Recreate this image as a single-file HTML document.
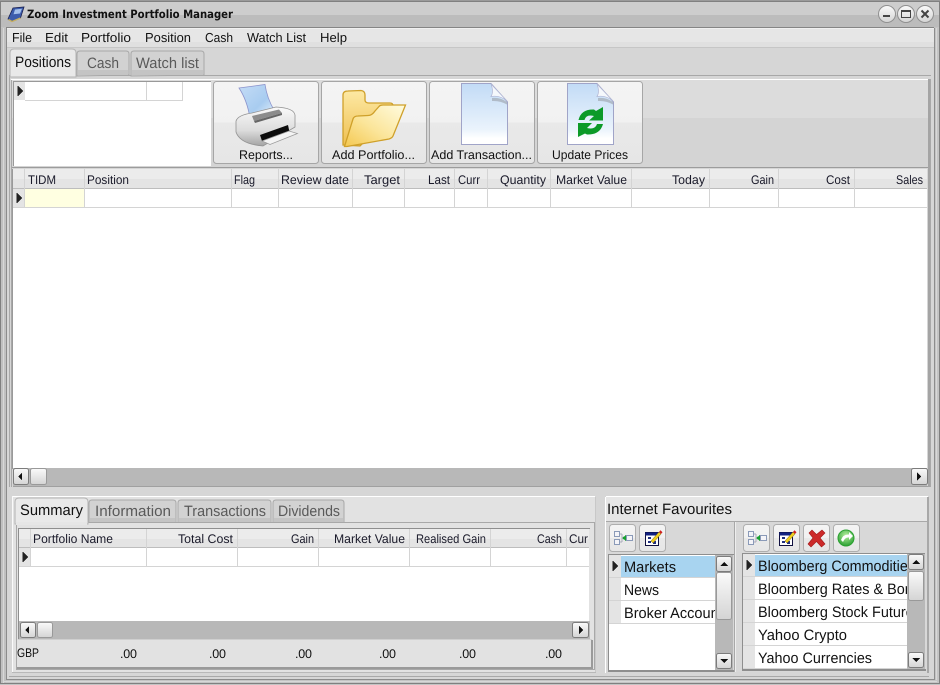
<!DOCTYPE html>
<html><head><meta charset="utf-8"><title>Zoom Investment Portfolio Manager</title>
<style>
html,body{margin:0;padding:0;background:#c8c8c8;overflow:hidden}
svg{display:block;width:940px;height:685px}
text{font-family:"Liberation Sans",sans-serif;font-size:12.5px;fill:#111;text-rendering:geometricPrecision}
.h{font-size:12.5px;fill:#1a1a2a}
.m{font-size:13px;fill:#111}
.t{font-size:15px;fill:#5a5a5a}
.l{font-size:15px;fill:#111}
</style></head><body>
<svg xmlns="http://www.w3.org/2000/svg" width="940" height="685" viewBox="0 0 940 685" shape-rendering="crispEdges">
<defs>
<clipPath id="cl"><rect x="621" y="555" width="94" height="70"/></clipPath>
<clipPath id="cr"><rect x="755" y="554" width="152" height="115"/></clipPath>
<linearGradient id="btn" x1="0" y1="0" x2="0" y2="1"><stop offset="0" stop-color="#f4f4f4"/><stop offset=".5" stop-color="#f1f1f1"/><stop offset=".5" stop-color="#e9e9e9"/><stop offset="1" stop-color="#e6e6e6"/></linearGradient>
<linearGradient id="sb" x1="0" y1="0" x2="0" y2="1"><stop offset="0" stop-color="#fafafa"/><stop offset="1" stop-color="#d4d4d4"/></linearGradient>
<linearGradient id="doc" x1="0" y1="0" x2="0" y2="1"><stop offset="0" stop-color="#c2dbf6"/><stop offset=".75" stop-color="#eaf3fc"/><stop offset=".9" stop-color="#fff"/><stop offset="1" stop-color="#fff"/></linearGradient>
<linearGradient id="fold" x1="0" y1="0" x2="0" y2="1"><stop offset="0" stop-color="#fde9a4"/><stop offset="1" stop-color="#eebf50"/></linearGradient>
<linearGradient id="fold2" x1="1" y1="0" x2="0" y2="1"><stop offset="0" stop-color="#fffce0"/><stop offset=".55" stop-color="#fbe59a"/><stop offset="1" stop-color="#f4c850"/></linearGradient>
<linearGradient id="pr" x1="0" y1="0" x2="0" y2="1"><stop offset="0" stop-color="#fafafa"/><stop offset=".6" stop-color="#dcdcdc"/><stop offset="1" stop-color="#a4a4a4"/></linearGradient>
<linearGradient id="pap" x1="0" y1="0" x2="1" y2="1"><stop offset="0" stop-color="#c4dcf6"/><stop offset=".6" stop-color="#a8ccf0"/><stop offset="1" stop-color="#e8f2fb"/></linearGradient>
<radialGradient id="grn" cx=".5" cy=".35" r=".7"><stop offset="0" stop-color="#b8f0a0"/><stop offset="1" stop-color="#1f9a2a"/></radialGradient>

<g id="rowmark"><path d="M0 0L5 5L0 10Z" fill="#222"/><path d="M0 0L0 10" stroke="#222"/></g>
<g id="tree" shape-rendering="crispEdges">
<rect x="0.5" y="0.5" width="5" height="5" fill="#f4f4f8" stroke="#8a9ab8"/>
<rect x="0.5" y="8.5" width="5" height="5" fill="#f4f4f8" stroke="#8a9ab8"/>
<rect x="12.5" y="4.5" width="6" height="5" fill="#f4f4f8" stroke="#8a9ab8"/>
<path d="M6 3H8M6 11H8M8 3V11" stroke="#aab" fill="none"/>
<path d="M12 4V10L8 7Z" fill="#18a030"/>
</g>
<g id="edit" shape-rendering="auto">
<rect x="0.5" y="3.5" width="13" height="13" fill="#fff" stroke="#101040"/>
<rect x="0.5" y="3.5" width="13" height="3" fill="#102080"/>
<path d="M3 8H6V10H3ZM3 12H6V14H3ZM8 12H11V15H8Z" fill="#203080"/>
<path d="M6 12L14 3L16 5L8 14Z" fill="#f0d020" stroke="#806010" stroke-width=".5"/>
<path d="M14 3L15.500 1.200L17.500 3.200L16 5Z" fill="#d02020"/>
</g>
</defs>

<!-- window frame -->
<rect width="940" height="685" fill="#c4c4c4"/>
<rect x="0" y="0" width="940" height="1" fill="#9a9a9a"/>
<rect x="0.5" y="1.500" width="939" height="682" fill="none" stroke="#808080"/>
<rect x="1" y="2" width="938" height="13" fill="#cdcdcd"/>
<rect x="1" y="15" width="938" height="12" fill="#bcbcbc"/>
<rect x="6" y="27" width="928" height="1" fill="#858585"/>
<rect x="1" y="28" width="5" height="655" fill="#c0c0c0"/>
<rect x="3" y="28" width="1" height="655" fill="#d8d8d8"/>
<rect x="6" y="28" width="1" height="651" fill="#8c8c8c"/>
<rect x="934" y="28" width="1" height="652" fill="#8c8c8c"/>
<rect x="936" y="28" width="1" height="652" fill="#d8d8d8"/>
<rect x="6" y="679" width="929" height="1" fill="#8c8c8c"/>
<rect x="3" y="681" width="934" height="1" fill="#d8d8d8"/>

<!-- title icon -->
<g shape-rendering="auto">
<path d="M8 19L13 8L24 7L20.500 18L12 21.500Z" fill="#3c5cac" stroke="#1a2050" stroke-width=".8"/>
<path d="M8.500 19.500L12 21.500L20.500 18" fill="none" stroke="#c8b060" stroke-width="1.300"/>
<path d="M15 9.500L22 8.800L20 13.500L13.500 14.200Z" fill="#a4c0ec"/>
</g>
<text x="27" y="18" style="font-size:11.5px;font-weight:bold;font-family:'DejaVu Sans',sans-serif" textLength="206" lengthAdjust="spacingAndGlyphs">Zoom Investment Portfolio Manager</text>

<!-- window buttons -->
<g shape-rendering="auto">
<g stroke="#909090" fill="url(#sb)"><circle cx="887" cy="14" r="8.500"/><circle cx="906" cy="14" r="8.500"/><circle cx="925" cy="14" r="8.500"/></g>
<rect x="883" y="15" width="7" height="2" fill="#444"/>
<rect x="901.500" y="10.500" width="9" height="7" fill="none" stroke="#444"/><rect x="901" y="10" width="10" height="2" fill="#444"/>
<path d="M921.500 10.500L928.500 17.500M928.500 10.500L921.500 17.500" stroke="#444" stroke-width="2"/>
</g>

<!-- client -->
<rect x="7" y="28" width="927" height="651" fill="#d6d6d6"/>
<!-- menu -->
<rect x="7" y="28" width="927" height="1" fill="#f0f0f0"/>
<rect x="7" y="29" width="927" height="13" fill="#e6e6e6"/>
<rect x="7" y="42" width="927" height="5" fill="#e0e0e0"/>
<rect x="7" y="47" width="927" height="1" fill="#c6c6c6"/>
<text class="m" x="12" y="42" textLength="20" lengthAdjust="spacingAndGlyphs">File</text>
<text class="m" x="45" y="42" textLength="23" lengthAdjust="spacingAndGlyphs">Edit</text>
<text class="m" x="81" y="42" textLength="50" lengthAdjust="spacingAndGlyphs">Portfolio</text>
<text class="m" x="145" y="42" textLength="46" lengthAdjust="spacingAndGlyphs">Position</text>
<text class="m" x="205" y="42" textLength="28" lengthAdjust="spacingAndGlyphs">Cash</text>
<text class="m" x="247" y="42" textLength="59" lengthAdjust="spacingAndGlyphs">Watch List</text>
<text class="m" x="320" y="42" textLength="27" lengthAdjust="spacingAndGlyphs">Help</text>

<!-- page border -->
<rect x="9.500" y="75.500" width="921" height="414" fill="#d6d6d6" stroke="#a8a8a8"/>
<rect x="10" y="76" width="921" height="3" fill="#d6d6d6"/>

<!-- top tabs -->
<g shape-rendering="auto">
<path d="M77 76V54Q77 51 80 51H126Q129 51 129 54V75Z" fill="#d2d2d2" stroke="#a8a8a8"/>
<path d="M131 76V54Q131 51 134 51H201Q204 51 204 54V75Z" fill="#d2d2d2" stroke="#a8a8a8"/>
<path d="M10 77V53Q10 49 14 49H72Q76 49 76 53V77Z" fill="#e9e9e9" stroke="#b4b4b4"/>
</g>
<rect x="78" y="70" width="50" height="5" fill="#c4c4c4"/>
<rect x="132" y="70" width="71" height="5" fill="#c4c4c4"/>
<text x="15" y="67" style="font-size:15px" textLength="56" lengthAdjust="spacingAndGlyphs">Positions</text>
<text class="t" x="87" y="68" textLength="32" lengthAdjust="spacingAndGlyphs">Cash</text>
<text class="t" x="136" y="68" textLength="63" lengthAdjust="spacingAndGlyphs">Watch list</text>

<!-- toolbar panel -->
<rect x="11" y="79" width="918" height="40" fill="#dcdcdc"/>
<rect x="11" y="118" width="918" height="49" fill="#d4d4d4"/>
<rect x="11" y="79" width="918" height="1" fill="#fff"/>
<rect x="11" y="167" width="918" height="1" fill="#9c9c9c"/>
<rect x="928" y="79" width="2" height="410" fill="#a4a4a4"/>
<rect x="11" y="80" width="1" height="408" fill="#a8a8a8"/>

<!-- position mini grid -->
<rect x="13" y="81" width="198" height="85" fill="#fff"/>
<rect x="13" y="81" width="1" height="85" fill="#999"/>
<rect x="13" y="81" width="198" height="1" fill="#999"/>
<rect x="14" y="82" width="11" height="18" fill="#e4e4e4"/>
<use href="#rowmark" x="18" y="86"/>
<rect x="25" y="100" width="158" height="1" fill="#d4d4d4"/>
<rect x="146" y="82" width="1" height="18" fill="#d4d4d4"/>
<rect x="182" y="82" width="1" height="18" fill="#d4d4d4"/>

<!-- buttons -->
<g shape-rendering="auto" fill="url(#btn)" stroke="#a6a6a6">
<rect x="213.500" y="81.500" width="105" height="82" rx="3"/>
<rect x="321.500" y="81.500" width="105" height="82" rx="3"/>
<rect x="429.500" y="81.500" width="105" height="82" rx="3"/>
<rect x="537.500" y="81.500" width="105" height="82" rx="3"/>
</g>
<text x="239" y="159" textLength="54" lengthAdjust="spacingAndGlyphs">Reports...</text>
<text x="332" y="159" textLength="83" lengthAdjust="spacingAndGlyphs">Add Portfolio...</text>
<text x="431" y="159" textLength="101" lengthAdjust="spacingAndGlyphs">Add Transaction...</text>
<text x="552" y="159" textLength="76" lengthAdjust="spacingAndGlyphs">Update Prices</text>

<!-- printer -->
<g shape-rendering="auto">
<path d="M239 88L265 84.500Q267 98 274 110L250 118Q247 100 239 88Z" fill="url(#pap)" stroke="#8a92cc" stroke-width=".8"/>
<path d="M236 121Q238 115 252 113L276 107Q294 108 295 115V127L263 146Q240 144 236 132Z" fill="url(#pr)" stroke="#929292" stroke-width=".8"/>
<path d="M252 116L279 109.500L282 113L254 121Z" fill="#8c8c8c"/>
<path d="M254 121L282 113V115L255 123Z" fill="#666"/>
<path d="M260 135L288 125L289.500 132L262 141Z" fill="#0c0c0c"/>
<path d="M262 141L289 131L297.500 133.500L270 144.500Z" fill="#f4f4f4" stroke="#9a9a9a" stroke-width=".7"/>
</g>

<!-- folder -->
<g shape-rendering="auto">
<path d="M343 145V95Q343 91 348 91L361 90.500Q365 91 365 95V100Q365 103 369 103H390Q393 103 393 106V114L360 146Z" fill="url(#fold)" stroke="#cfa02a" stroke-width="1.300"/>
<path d="M344.500 146.500L353 119Q354 116 358 116L368 115.500Q372 115.500 375 111L379 106.500Q380 105 383 105L405.500 105L393 136Q392 138 389 139L347 146.500Z" fill="url(#fold2)" stroke="#cfa02a" stroke-width="1.300"/>
</g>

<!-- docs -->
<g shape-rendering="auto">
<path d="M461.500 83.500H491L507.500 102V144.500H461.500Z" fill="url(#doc)" stroke="#a0a4c8"/>
<path d="M491 84Q494 92 491 96.500Q500 95 507 101Z" fill="#f5f8fc" stroke="#b0b6d4" stroke-width=".7"/>
<path d="M492 98Q500 97 507 102V104.500Q500 100.500 492 101Z" fill="#a8b0bc" opacity=".8"/>
<path d="M567.500 83.500H597L613.500 102V144.500H567.500Z" fill="url(#doc)" stroke="#a0a4c8"/>
<path d="M597 84Q600 92 597 96.500Q606 95 613 101Z" fill="#f5f8fc" stroke="#b0b6d4" stroke-width=".7"/>
<path d="M598 98Q606 97 613 102V104.500Q606 100.500 598 101Z" fill="#a8b0bc" opacity=".8"/>
<path d="M578.500 120Q581 109 594 109.500L596 111L603 107V120.500H589L594 116Q586 114 584.500 120Z" fill="#0c9a28"/>
<path d="M603 124Q600 135 587 134.500L585 133.500L578 137V123H592L587 128Q595 130 597 124Z" fill="#0c9a28"/>
</g>

<!-- main grid -->
<rect x="13" y="169" width="914" height="299" fill="#fff"/>
<rect x="13" y="169" width="914" height="10" fill="#ececec"/>
<rect x="13" y="179" width="914" height="9" fill="#e4e4e4"/>
<rect x="13" y="188" width="914" height="1" fill="#bdbdbd"/>
<rect x="12" y="169" width="1" height="300" fill="#9a9a9a"/>
<rect x="13" y="189" width="11" height="18" fill="#e4e4e4"/>
<use href="#rowmark" x="17" y="193"/>
<rect x="25" y="189" width="59" height="18" fill="#ffffe1"/>
<rect x="13" y="207" width="914" height="1" fill="#d4d4d4"/>
<g fill="#d4d4d4">
<rect x="24" y="169" width="1" height="38"/><rect x="84" y="169" width="1" height="38"/><rect x="231" y="169" width="1" height="38"/><rect x="278" y="169" width="1" height="38"/><rect x="352" y="169" width="1" height="38"/><rect x="404" y="169" width="1" height="38"/><rect x="454" y="169" width="1" height="38"/><rect x="487" y="169" width="1" height="38"/><rect x="550" y="169" width="1" height="38"/><rect x="631" y="169" width="1" height="38"/><rect x="709" y="169" width="1" height="38"/><rect x="778" y="169" width="1" height="38"/><rect x="854" y="169" width="1" height="38"/>
</g>
<text class="h" x="28" y="184" textLength="28" lengthAdjust="spacingAndGlyphs">TIDM</text>
<text class="h" x="87" y="184" textLength="42" lengthAdjust="spacingAndGlyphs">Position</text>
<text class="h" x="234" y="184" textLength="21" lengthAdjust="spacingAndGlyphs">Flag</text>
<text class="h" x="281" y="184" textLength="68" lengthAdjust="spacingAndGlyphs">Review date</text>
<text class="h" x="364" y="184" textLength="36" lengthAdjust="spacingAndGlyphs">Target</text>
<text class="h" x="428" y="184" textLength="22" lengthAdjust="spacingAndGlyphs">Last</text>
<text class="h" x="458" y="184" textLength="22" lengthAdjust="spacingAndGlyphs">Curr</text>
<text class="h" x="500" y="184" textLength="46" lengthAdjust="spacingAndGlyphs">Quantity</text>
<text class="h" x="556" y="184" textLength="71" lengthAdjust="spacingAndGlyphs">Market Value</text>
<text class="h" x="672" y="184" textLength="33" lengthAdjust="spacingAndGlyphs">Today</text>
<text class="h" x="751" y="184" textLength="23" lengthAdjust="spacingAndGlyphs">Gain</text>
<text class="h" x="826" y="184" textLength="24" lengthAdjust="spacingAndGlyphs">Cost</text>
<text class="h" x="896" y="184" textLength="27" lengthAdjust="spacingAndGlyphs">Sales</text>

<!-- main hscroll -->
<rect x="13" y="468" width="914" height="18" fill="#b8b8b8"/>
<rect x="13" y="486" width="915" height="1" fill="#a0a0a0"/>
<g shape-rendering="auto" stroke="#7c7c7c" fill="url(#sb)">
<rect x="13.500" y="468.500" width="15" height="16" rx="2"/>
<rect x="30.500" y="468.500" width="16" height="16" rx="2" stroke="#999"/>
<rect x="911.500" y="468.500" width="16" height="16" rx="2"/>
</g>
<path d="M18 476.500L22 472.500V480.500Z" fill="#111"/>
<path d="M921 476.500L917 472.500V480.500Z" fill="#111"/>
<rect x="928" y="468" width="2" height="20" fill="#a4a4a4"/>

<!-- lower area -->
<rect x="7" y="487" width="927" height="192" fill="#d6d6d6"/>
<rect x="12" y="496" width="583" height="1" fill="#fff"/>
<rect x="12" y="497" width="583" height="175" fill="#e2e2e2"/>
<rect x="12" y="496" width="1" height="176" fill="#fafafa"/>
<rect x="595" y="497" width="1" height="175" fill="#c8c8c8"/>
<rect x="12" y="672" width="584" height="1" fill="#b8b8b8"/>
<rect x="9" y="676" width="920" height="1" fill="#a8a8a8"/>

<!-- lower tabs -->
<g shape-rendering="auto">
<path d="M89 523V503Q89 500 92 500H173Q176 500 176 503V523Z" fill="#d2d2d2" stroke="#a8a8a8"/>
<path d="M178 523V503Q178 500 181 500H268Q271 500 271 503V523Z" fill="#d2d2d2" stroke="#a8a8a8"/>
<path d="M273 523V503Q273 500 276 500H341Q344 500 344 503V523Z" fill="#d2d2d2" stroke="#a8a8a8"/>
</g>
<rect x="16.500" y="522.500" width="578" height="147" fill="#e2e2e2" stroke="#a8a8a8"/>
<g shape-rendering="auto"><path d="M15 524V502Q15 498 19 498H84Q88 498 88 502V524Z" fill="#e9e9e9" stroke="#b4b4b4"/></g>
<rect x="16" y="522" width="71" height="3" fill="#e6e6e6"/>
<rect x="90" y="518" width="85" height="4" fill="#c4c4c4"/>
<rect x="179" y="518" width="91" height="4" fill="#c4c4c4"/>
<rect x="274" y="518" width="69" height="4" fill="#c4c4c4"/>
<text x="20" y="515" style="font-size:15px" textLength="63" lengthAdjust="spacingAndGlyphs">Summary</text>
<text class="t" x="95" y="516" textLength="76" lengthAdjust="spacingAndGlyphs">Information</text>
<text class="t" x="184" y="516" textLength="82" lengthAdjust="spacingAndGlyphs">Transactions</text>
<text class="t" x="278" y="516" textLength="62" lengthAdjust="spacingAndGlyphs">Dividends</text>

<!-- summary grid -->
<rect x="19" y="529" width="570" height="92" fill="#fff"/>
<rect x="18" y="528" width="572" height="1" fill="#8e8e8e"/>
<rect x="18" y="528" width="1" height="112" fill="#8e8e8e"/>
<rect x="19" y="529" width="570" height="10" fill="#ececec"/>
<rect x="19" y="539" width="570" height="8" fill="#e4e4e4"/>
<rect x="19" y="547" width="570" height="1" fill="#bdbdbd"/>
<rect x="19" y="548" width="11" height="18" fill="#e4e4e4"/>
<use href="#rowmark" x="23" y="552"/>
<rect x="19" y="566" width="570" height="1" fill="#d4d4d4"/>
<g fill="#d4d4d4">
<rect x="30" y="529" width="1" height="37"/><rect x="146" y="529" width="1" height="37"/><rect x="237" y="529" width="1" height="37"/><rect x="318" y="529" width="1" height="37"/><rect x="409" y="529" width="1" height="37"/><rect x="490" y="529" width="1" height="37"/><rect x="566" y="529" width="1" height="37"/>
</g>
<text class="h" x="33" y="543" textLength="80" lengthAdjust="spacingAndGlyphs">Portfolio Name</text>
<text class="h" x="178" y="543" textLength="55" lengthAdjust="spacingAndGlyphs">Total Cost</text>
<text class="h" x="291" y="543" textLength="23" lengthAdjust="spacingAndGlyphs">Gain</text>
<text class="h" x="334" y="543" textLength="71" lengthAdjust="spacingAndGlyphs">Market Value</text>
<text class="h" x="416" y="543" textLength="70" lengthAdjust="spacingAndGlyphs">Realised Gain</text>
<text class="h" x="537" y="543" textLength="25" lengthAdjust="spacingAndGlyphs">Cash</text>
<text class="h" x="569" y="543" textLength="19" lengthAdjust="spacingAndGlyphs">Cur</text>
<rect x="589" y="529" width="2" height="110" fill="#e2e2e2"/>

<rect x="19" y="621" width="571" height="18" fill="#b8b8b8"/>
<rect x="18" y="639" width="574" height="1" fill="#cfcfcf"/>
<g shape-rendering="auto" stroke="#7c7c7c" fill="url(#sb)">
<rect x="20.500" y="622.500" width="15" height="15" rx="2"/>
<rect x="37.500" y="622.500" width="15" height="15" rx="2" stroke="#999"/>
<rect x="572.500" y="622.500" width="16" height="15" rx="2"/>
</g>
<path d="M25 630L29 626V634Z" fill="#111"/>
<path d="M583 630L579 626V634Z" fill="#111"/>

<!-- footer -->
<rect x="17" y="640" width="574" height="27" fill="#e2e2e2"/>
<rect x="17" y="667" width="574" height="2" fill="#9a9a9a"/>
<rect x="591" y="640" width="2" height="29" fill="#9a9a9a"/>
<text x="17" y="657" textLength="22" lengthAdjust="spacingAndGlyphs">GBP</text>
<text x="120" y="658" textLength="17">.00</text>
<text x="209" y="658" textLength="17">.00</text>
<text x="295" y="658" textLength="17">.00</text>
<text x="379" y="658" textLength="17">.00</text>
<text x="459" y="658" textLength="17">.00</text>
<text x="545" y="658" textLength="17">.00</text>

<!-- right panel -->
<rect x="606" y="496" width="322" height="176" fill="#d8d8d8"/>
<rect x="606" y="496" width="322" height="1" fill="#fff"/>
<rect x="605" y="497" width="1" height="176" fill="#fff"/>
<rect x="606" y="497" width="321" height="25" fill="#e6e6e6"/>
<rect x="606" y="521" width="321" height="1" fill="#a8a8a8"/>
<rect x="927" y="497" width="2" height="176" fill="#a8a8a8"/>
<text x="607" y="514" style="font-size:15px" textLength="125" lengthAdjust="spacingAndGlyphs">Internet Favourites</text>
<rect x="734" y="522" width="1" height="150" fill="#a8a8a8"/>
<rect x="735" y="522" width="1" height="150" fill="#eee"/>

<!-- small toolbar buttons -->
<g shape-rendering="auto" fill="url(#btn)" stroke="#aeaeae">
<rect x="609.500" y="524.500" width="26" height="27" rx="3"/>
<rect x="639.500" y="524.500" width="26" height="27" rx="3"/>
<rect x="743.500" y="524.500" width="26" height="27" rx="3"/>
<rect x="773.500" y="524.500" width="26" height="27" rx="3"/>
<rect x="803.500" y="524.500" width="26" height="27" rx="3"/>
<rect x="833.500" y="524.500" width="26" height="27" rx="3"/>
</g>
<use href="#tree" x="614" y="531"/>
<use href="#tree" x="748" y="531"/>
<use href="#edit" x="645" y="529"/>
<use href="#edit" x="779" y="529"/>
<g shape-rendering="auto">
<path d="M809 533L812 530L816.500 534.500L822 530L825 533L820 538L825 544L821.500 547L816.500 541.500L811 547L808 544L813 538Z" fill="#cc2a2a" stroke="#a01818" stroke-width=".6"/>
<circle cx="846" cy="538" r="8" fill="url(#grn)" stroke="#2aa030"/>
<path d="M841 540Q843 534 849 534.500V532L853 536L849 540V537.500Q845 537 843 542Z" fill="#fff"/>
</g>

<!-- left list -->
<rect x="609" y="555" width="124" height="115" fill="#fff"/>
<rect x="608" y="554" width="126" height="1" fill="#8e8e8e"/>
<rect x="608" y="554" width="1" height="117" fill="#8e8e8e"/>
<rect x="608" y="670" width="126" height="2" fill="#8e8e8e"/>
<rect x="609" y="555" width="12" height="68" fill="#e4e4e4"/>
<rect x="621" y="556" width="95" height="21" fill="#a8d4f0"/>
<use href="#rowmark" x="613" y="561"/>
<rect x="609" y="577" width="107" height="1" fill="#d4d4d4"/>
<rect x="609" y="600" width="107" height="1" fill="#d4d4d4"/>
<rect x="609" y="623" width="107" height="1" fill="#d4d4d4"/>
<g clip-path="url(#cl)">
<text class="l" x="624" y="572" textLength="52" lengthAdjust="spacingAndGlyphs">Markets</text>
<text class="l" x="624" y="595" textLength="35" lengthAdjust="spacingAndGlyphs">News</text>
<text class="l" x="624" y="618" textLength="106" lengthAdjust="spacingAndGlyphs">Broker Accounts</text>
</g>
<rect x="715" y="555" width="18" height="115" fill="#b8b8b8"/>
<g shape-rendering="auto" stroke="#7c7c7c" fill="url(#sb)">
<rect x="716.500" y="556.500" width="15" height="15" rx="2"/>
<rect x="716.500" y="572.500" width="15" height="47" rx="2" stroke="#999"/>
<rect x="716.500" y="653.500" width="15" height="15" rx="2"/>
</g>
<path d="M720 566H728L724 562Z" fill="#111"/>
<path d="M720 659H728L724 663Z" fill="#111"/>

<!-- right list -->
<rect x="743" y="554" width="181" height="115" fill="#fff"/>
<rect x="742" y="553" width="183" height="1" fill="#8e8e8e"/>
<rect x="742" y="553" width="1" height="118" fill="#8e8e8e"/>
<rect x="742" y="669" width="184" height="2" fill="#8e8e8e"/>
<rect x="743" y="554" width="12" height="115" fill="#e4e4e4"/>
<rect x="755" y="555" width="152" height="21" fill="#a8d4f0"/>
<use href="#rowmark" x="747" y="560"/>
<rect x="743" y="576" width="164" height="1" fill="#d4d4d4"/>
<rect x="743" y="599" width="164" height="1" fill="#d4d4d4"/>
<rect x="743" y="622" width="164" height="1" fill="#d4d4d4"/>
<rect x="743" y="645" width="164" height="1" fill="#d4d4d4"/>
<rect x="743" y="668" width="164" height="1" fill="#d4d4d4"/>
<g clip-path="url(#cr)">
<text class="l" x="758" y="571" textLength="157" lengthAdjust="spacingAndGlyphs">Bloomberg Commodities</text>
<text class="l" x="758" y="594" textLength="170" lengthAdjust="spacingAndGlyphs">Bloomberg Rates &amp; Bonds</text>
<text class="l" x="758" y="617" textLength="163" lengthAdjust="spacingAndGlyphs">Bloomberg Stock Futures</text>
<text class="l" x="758" y="640" textLength="89" lengthAdjust="spacingAndGlyphs">Yahoo Crypto</text>
<text class="l" x="758" y="663" textLength="114" lengthAdjust="spacingAndGlyphs">Yahoo Currencies</text>
</g>
<rect x="907" y="554" width="18" height="115" fill="#b8b8b8"/>
<g shape-rendering="auto" stroke="#7c7c7c" fill="url(#sb)">
<rect x="908.500" y="554.500" width="15" height="15" rx="2"/>
<rect x="908.500" y="571.500" width="15" height="29" rx="2" stroke="#999"/>
<rect x="908.500" y="652.500" width="15" height="15" rx="2"/>
</g>
<path d="M912 564H920L916 560Z" fill="#111"/>
<path d="M912 658H920L916 662Z" fill="#111"/>
</svg>
</body></html>
